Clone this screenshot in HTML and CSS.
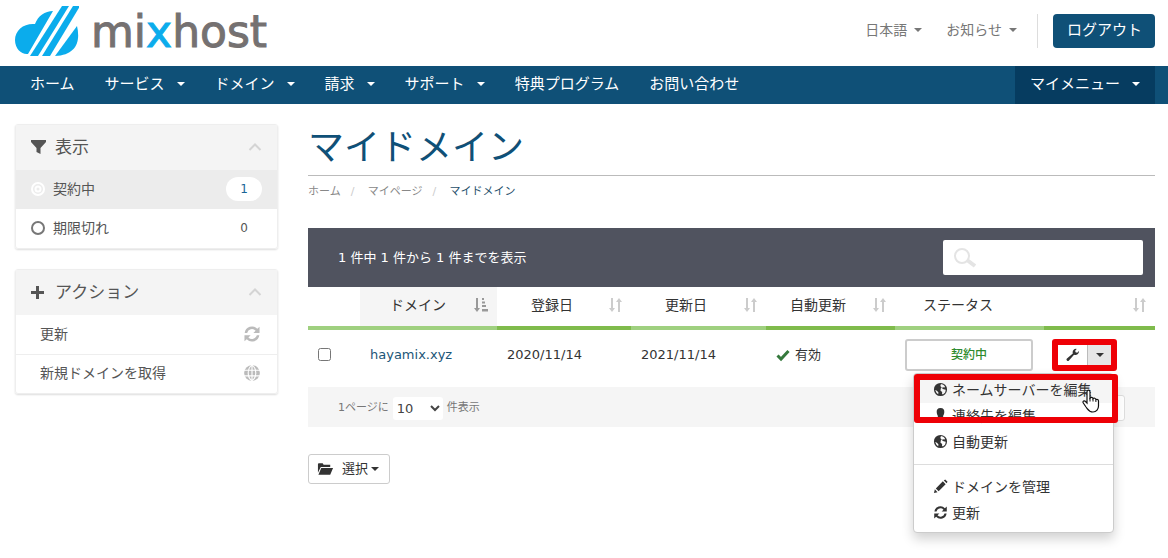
FILE: index.html
```html
<!DOCTYPE html>
<html lang="ja">
<head>
<meta charset="utf-8">
<meta name="viewport" content="width=device-width, initial-scale=1">
<title>マイドメイン - mixhost</title>
<link rel="stylesheet" href="styles.css">
</head>
<body>
<svg class="defs" aria-hidden="true">
  <symbol id="i-refresh" viewBox="0 0 16 16"><path d="M1.500 7a6.500 6.500 0 0 1 11.200-3.600L14.700 1.500V7H9.200l2-2A4.400 4.400 0 0 0 3.700 7zM14.500 9a6.500 6.500 0 0 1-11.200 3.600L1.300 14.500V9h5.500l-2 2a4.400 4.400 0 0 0 7.500-2z"/></symbol>
  <symbol id="i-earth" viewBox="0 0 16 16"><path fill-rule="evenodd" d="M8 1a7 7 0 1 0 0 14A7 7 0 0 0 8 1zM8.500 2.200l2.500.8 1.800 1.800-.8 1.200-1.500-.6-.8 1.400 1.600.8 2.300.6-.6 3-2.400 2.200-1-.8.200-2-1.800-1.400.3-2.200 1-1.200-1.500-1.500zM2.300 8.500l1.900.8 1.600 1.800-.3 1.900-1.800-1.500z"/></symbol>
  <symbol id="i-sort" viewBox="0 0 16 16"><path d="M4 1h2v10h2l-3 4-3-4h2zM11 15V5H9l3-4 3 4h-2v10z"/></symbol>
  <symbol id="i-up" viewBox="0 0 14 8"><path d="M1.500 7 7 1.500 12.500 7" fill="none" stroke="currentColor" stroke-width="2"/></symbol>
</svg>

<header class="top">
  <a class="logo" href="#" aria-label="mixhost">
    <svg class="logo-mark" viewBox="0 0 64 50" aria-hidden="true">
      <g fill="#0bacec">
        <path d="M38 5C30 5 23 10 20 18C9 17 0 24 0 34C0 43 7 49 13 48Z"/>
        <path d="M47 0h7L23 50h-8Z"/>
        <path d="M58 0h7L35 50h-8Z"/>
        <path d="M62 20C66 37 60 49 40 50Z"/>
      </g>
    </svg>
    <span class="logo-word">mi<span class="logo-x">x</span>host</span>
  </a>
  <div class="tools">
    <button class="tool" type="button">日本語<span class="caret"></span></button>
    <button class="tool" type="button">お知らせ<span class="caret"></span></button>
    <span class="tool-rule"></span>
    <a class="logout" href="#">ログアウト</a>
  </div>
</header>

<nav class="nav">
  <a href="#">ホーム</a>
  <a href="#">サービス<span class="caret"></span></a>
  <a href="#">ドメイン<span class="caret"></span></a>
  <a href="#">請求<span class="caret"></span></a>
  <a href="#">サポート<span class="caret"></span></a>
  <a href="#">特典プログラム</a>
  <a href="#">お問い合わせ</a>
  <a class="nav-me" href="#">マイメニュー<span class="caret"></span></a>
</nav>

<div class="page">
  <aside class="side">
    <section class="panel">
      <h2 class="panel-head">
        <svg class="ic16" viewBox="0 0 16 16"><path d="M0 1h15v2L9.500 9v6l-4-2V9L0 3z"/></svg>
        表示
        <svg class="chev"><use href="#i-up"/></svg>
      </h2>
      <a class="filter on" href="#"><svg class="ic16 ring" viewBox="0 0 16 16"><circle cx="7" cy="8" r="6"/><circle cx="7" cy="8" r="2.500"/></svg>契約中<span class="badge">1</span></a>
      <a class="filter" href="#"><svg class="ic16 ring" viewBox="0 0 16 16"><circle cx="7" cy="8" r="6"/></svg>期限切れ<span class="badge">0</span></a>
    </section>
    <section class="panel">
      <h2 class="panel-head">
        <svg class="ic16" viewBox="0 0 16 16"><path d="M5 2h3v5h5v3H8v5H5v-5H0V7h5z"/></svg>
        アクション
        <svg class="chev"><use href="#i-up"/></svg>
      </h2>
      <a class="action" href="#">更新<svg class="action-ic" viewBox="0 0 16 16"><use href="#i-refresh"/></svg></a>
      <a class="action" href="#">新規ドメインを取得<svg class="action-ic" viewBox="0 0 16 16"><circle cx="8" cy="8" r="7"/><path class="grid-lines" d="M0 5.500h16M0 10.500h16M8 0v16M8 1C3.500 4 3.500 12 8 15M8 1c4.500 3 4.500 11 0 14"/></svg></a>
    </section>
  </aside>

  <main class="main">
    <h1 class="title">マイドメイン</h1>
    <nav class="crumbs"><a href="#">ホーム</a><span class="slash">/</span><a href="#">マイページ</a><span class="slash">/</span><span class="here">マイドメイン</span></nav>

    <div class="bar">
      <span>1 件中 1 件から 1 件までを表示</span>
      <label class="search">
        <svg viewBox="0 0 26 22"><circle cx="10" cy="9" r="7" fill="none" stroke="currentColor" stroke-width="2"/><path d="M15 13l8 6" stroke="currentColor" stroke-width="4"/></svg>
        <input type="search" aria-label="検索">
      </label>
    </div>

    <table class="domains">
      <colgroup><col class="c-check"><col class="c-domain"><col class="c-reg"><col class="c-due"><col class="c-auto"><col class="c-status"><col class="c-act"></colgroup>
      <thead>
        <tr>
          <th></th>
          <th class="sorted"><div class="th">ドメイン<svg class="sort" viewBox="0 0 16 16"><path d="M3 1h2v10h2l-3 4-3-4h2zM9 1h2v2H9zM9 4.500h3v2H9zM9 8h4v2H9zM9 12h6v2.500H9z"/></svg></div></th>
          <th><div class="th">登録日<svg class="sort"><use href="#i-sort"/></svg></div></th>
          <th><div class="th">更新日<svg class="sort"><use href="#i-sort"/></svg></div></th>
          <th><div class="th">自動更新<svg class="sort"><use href="#i-sort"/></svg></div></th>
          <th><div class="th">ステータス</div></th>
          <th><div class="th"><svg class="sort"><use href="#i-sort"/></svg></div></th>
        </tr>
      </thead>
      <tbody>
        <tr>
          <td><input class="check" type="checkbox" aria-label="hayamix.xyz を選択"></td>
          <td><a class="domain" href="#">hayamix.xyz</a></td>
          <td>2020/11/14</td>
          <td>2021/11/14</td>
          <td><span class="auto"><svg viewBox="0 0 14 14"><path d="M1.500 7.500 5 11l7.500-8" fill="none" stroke="#35793c" stroke-width="3"/></svg>有効</span></td>
          <td><span class="status">契約中</span></td>
          <td>
            <div class="group">
              <button class="g-main" type="button" aria-label="管理"><svg viewBox="0 0 16 16"><path d="M14.800 3.500a4 4 0 0 1-5.600 4.100l-5.800 6.600a1.600 1.600 0 0 1-2.300-2.300l6.700-5.700A4 4 0 0 1 12.200 1L10.500 3l.4 1.900 1.900.400z"/></svg></button><button class="g-caret" type="button" aria-label="メニューを開く"><span class="caret"></span></button>
              <span class="mark mark-group"></span>
              <div class="menu">
                <a class="hover" href="#"><svg><use href="#i-earth"/></svg>ネームサーバーを編集</a>
                <a href="#"><svg viewBox="0 0 16 16"><path d="M8 0c3 0 4.500 2 4 5-.3 2-1 3-1.500 4l4.500 2.500V15H1v-3.500L5.500 9C5 8 4.300 7 4 5c-.5-3 1-5 4-5z"/></svg>連絡先を編集</a>
                <a href="#"><svg><use href="#i-earth"/></svg>自動更新</a>
                <hr>
                <a href="#"><svg viewBox="0 0 16 16"><path d="M1 15l1-4 2.800 3zM3 10l7.500-7.500 3 3L6 13zM11.500 1.500 13 .5l2.500 2.500-1 1.500z"/></svg>ドメインを管理</a>
                <a href="#"><svg><use href="#i-refresh"/></svg>更新</a>
                <span class="mark mark-menu"></span>
                <svg class="hand" viewBox="0 0 18 24"><path d="M5 14V3c0-2.500 3-2.500 3 0v6c1-1.200 2.800-.8 3 .7 1-1 2.700-.6 2.900.9 1.200-.7 2.600 0 2.600 1.400v5c0 3-2 6-5.500 6C7 23 6 20.500 4 18L1.300 14c-1-1.800 1-2.900 2.200-1.500z" fill="#fff" stroke="#111" stroke-width="1.200"/><path d="M8 9v3.500M11 10v2.500M13.900 10.800V13" stroke="#111"/></svg>
              </div>
            </div>
          </td>
        </tr>
      </tbody>
    </table>

    <div class="pager">
      <label class="per">1ページに<select><option>10</option><option>25</option></select>件表示</label>
      <button class="pg" type="button" aria-label="次へ"></button>
    </div>

    <button class="choose" type="button"><svg viewBox="0 0 18 14"><path d="M1 11V2q0-1 1-1h4l1 1.500h7V5H4zM4.500 6H17l-3 7H1.500z"/></svg>選択<span class="caret"></span></button>
  </main>
</div>
</body>
</html>
```
FILE: styles.css
```css
* { box-sizing: border-box; }
body {
  min-height: 100vh;
  margin: 0;
  background: #fff;
  color: #333;
  font: 400 14px/20px "DejaVu Sans", "Noto Sans CJK JP", sans-serif;
}
a { color: inherit; text-decoration: none; }
button, input, select { font: inherit; color: inherit; }
button { cursor: pointer; }
svg { fill: currentColor; flex: none; }
.defs { position: absolute; width: 0; height: 0; }
.caret {
  display: inline-block;
  flex: none;
  border: 4px solid transparent;
  border-top-color: currentColor;
  border-bottom: 0;
}

.top {
  display: flex;
  justify-content: space-between;
  height: 66px;
  padding: 6px 13px 0 15px;
}
.logo { display: flex; gap: 12px; }
.logo-mark { width: 64px; height: 50px; }
.logo-word {
  color: #757171;
  font-size: 44px;
  line-height: 52px;
  -webkit-text-stroke: 1px currentColor;
}
.logo-x { color: #0bacec; }
.tools { display: flex; align-items: center; height: 34px; margin-top: 8px; }
.tool {
  display: flex;
  align-items: center;
  gap: 7px;
  margin-right: 24px;
  padding: 0 0 2px;
  border: 0;
  background: none;
  color: #777;
}
.tool + .tool { margin-right: 20px; }
.tool-rule { width: 1px; height: 34px; margin-right: 15px; background: #ddd; }
.logout {
  padding: 6px 13px 8px 14px;
  border-radius: 4px;
  background: #0f5077;
  color: #fff;
  font-size: 15px;
}

.nav {
  display: flex;
  padding: 0 13px 0 15px;
  background: #0f5077;
  color: #fff;
  font-size: 15px;
}
.nav a { display: flex; align-items: center; height: 38px; padding: 0 15px 2px; }
.nav .caret { margin-left: 12px; }
.nav .nav-me { margin-left: auto; background: #063c60; }

.page {
  display: grid;
  grid-template-columns: 263px minmax(0, 1fr);
  gap: 30px;
  padding: 20px 13px 60px 15px;
}
.side { display: flex; flex-direction: column; gap: 20px; }
.panel { border: 1px solid #eee; border-radius: 3px; box-shadow: 0 1px 2px #ddd; color: #555; }
.panel-head {
  display: flex;
  align-items: center;
  gap: 8px;
  height: 45px;
  margin: 0;
  padding: 0 15px 2px;
  background: #f4f4f4;
  font-size: 17px;
  font-weight: 400;
}
.ic16 { width: 16px; height: 16px; }
.chev { width: 14px; height: 8px; margin-left: auto; color: #d4d4d4; }
.filter { display: flex; align-items: center; gap: 6px; height: 39px; padding: 0 15px 2px; }
.filter.on { background: #ececec; }
.ring { fill: none; stroke: #777; stroke-width: 2; }
.on .ring { stroke: #fff; }
.badge {
  width: 36px;
  margin-left: auto;
  border-radius: 12px;
  font-size: 12px;
  line-height: 24px;
  text-align: center;
}
.on .badge { background: #fff; color: #1a6496; }
.action {
  display: flex;
  align-items: center;
  justify-content: space-between;
  height: 39px;
  padding: 0 16px 2px 24px;
}
.action + .action { border-top: 1px solid #eee; }
.action-ic { width: 18px; height: 18px; color: #bbb; }
.grid-lines { fill: none; stroke: #fff; }

.title {
  margin: 0;
  padding-top: 2px;
  padding-bottom: 5px;
  border-bottom: 1px solid #bbb;
  color: #0f5077;
  font-size: 36px;
  font-weight: 400;
  line-height: 44px;
}
.crumbs { display: flex; margin-top: 6px; color: #888; font-size: 11px; }
.slash { width: 27px; padding-left: 10px; color: #ccc; }
.here { color: #264f6b; }
.bar {
  display: flex;
  align-items: center;
  justify-content: space-between;
  height: 59px;
  margin-top: 26px;
  padding: 0 12px 0 30px;
  background: #50535f;
  color: #fff;
  font-size: 13px;
}
.search {
  display: flex;
  align-items: center;
  width: 200px;
  height: 35px;
  padding: 0 9px;
  border-radius: 2px;
  background: #fff;
  color: #e4e4e4;
}
.search svg { width: 26px; height: 22px; }
.search input { flex: 1; min-width: 0; border: 0; outline: 0; background: none; color: #333; }

.domains { width: 100%; border-collapse: collapse; table-layout: fixed; }
.c-check { width: 52px; }
.c-domain { width: 137px; }
.c-reg { width: 134px; }
.c-due { width: 135px; }
.c-auto { width: 129px; }
.c-status { width: 149px; }
.c-act { width: 111px; }
th { height: 41px; padding: 0 0 3px; border-bottom: 4px solid #9fd07f; font-weight: 400; }
th:nth-child(2n+3) { border-color: #7fbb4c; }
th.sorted { background: #f5f5f5; }
.th { display: flex; align-items: center; justify-content: space-between; padding: 0 8px 0 30px; }
th:nth-child(n+3) .th { padding-left: 34px; }
th:nth-child(5) .th { padding-left: 24px; }
th:nth-child(6) .th { padding-left: 28px; }
.sort { width: 16px; height: 16px; margin-left: auto; color: #ccc; }
.sorted .sort { color: #999; }
td { height: 59px; padding: 0 10px 8px; font-size: 13px; }
.check { display: block; margin: 0; }
.domain { color: #1b5577; }
.auto { display: flex; align-items: center; gap: 5px; }
.auto svg { width: 14px; height: 14px; }
.status {
  display: block;
  width: 128px;
  border: 2px solid #ccc;
  border-radius: 3px;
  color: #2e8b2e;
  font-size: 12px;
  font-weight: 500;
  line-height: 28px;
  text-align: center;
}
.group { position: relative; display: flex; width: 53px; height: 20px; margin-left: 4px; }
.group button { display: flex; align-items: center; justify-content: center; padding: 0; border: 0; }
.g-main { flex: 1; background: #fff; }
.g-main svg { width: 14px; height: 14px; }
.group .g-caret { width: 24px; border-left: 1px solid #bbb; background: #e6e6e6; }
.mark { position: absolute; border: 6px solid #ee0006; border-radius: 3px; }
.mark-group { inset: -6px; }
.menu {
  position: absolute;
  top: 28px;
  right: -3px;
  z-index: 1;
  width: 201px;
  padding: 3px 0 6px;
  border: 1px solid #ccc;
  border-radius: 4px;
  background: #fff;
  box-shadow: 0 6px 12px rgba(0, 0, 0, .18);
  font-size: 14px;
}
.menu a { display: flex; align-items: center; gap: 4px; height: 26px; padding-left: 19px; white-space: nowrap; }
.menu a svg { width: 15px; height: 15px; }
.menu .hover { background: #f5f5f5; }
.menu hr { margin: 9px 0; border: 0; border-top: 1px solid #ddd; }
.mark-menu { top: 0; left: 0; right: -5px; height: 49px; }
.hand { position: absolute; top: 15px; left: 168px; width: 18px; height: 24px; }

.pager {
  display: flex;
  align-items: center;
  justify-content: space-between;
  height: 40px;
  padding: 2px 30px 0;
  background: #f5f5f5;
}
.per { display: flex; align-items: center; gap: 4px; color: #777; font-size: 11px; }
.per select {
  width: 50px;
  height: 23px;
  border: 0;
  border-radius: 3px;
  background: #fff;
  color: #444;
  font-size: 13px;
}
.pg { width: 30px; height: 26px; border: 1px solid #ddd; border-radius: 3px; background: #fff; }
.choose {
  display: flex;
  align-items: center;
  height: 30px;
  margin-top: 27px;
  padding: 0 10px 0 8px;
  border: 1px solid #ccc;
  border-radius: 3px;
  background: #fff;
  font-size: 13px;
}
.choose svg { width: 17px; height: 14px; margin-right: 8px; }
.choose .caret { margin-left: 3px; }
```
